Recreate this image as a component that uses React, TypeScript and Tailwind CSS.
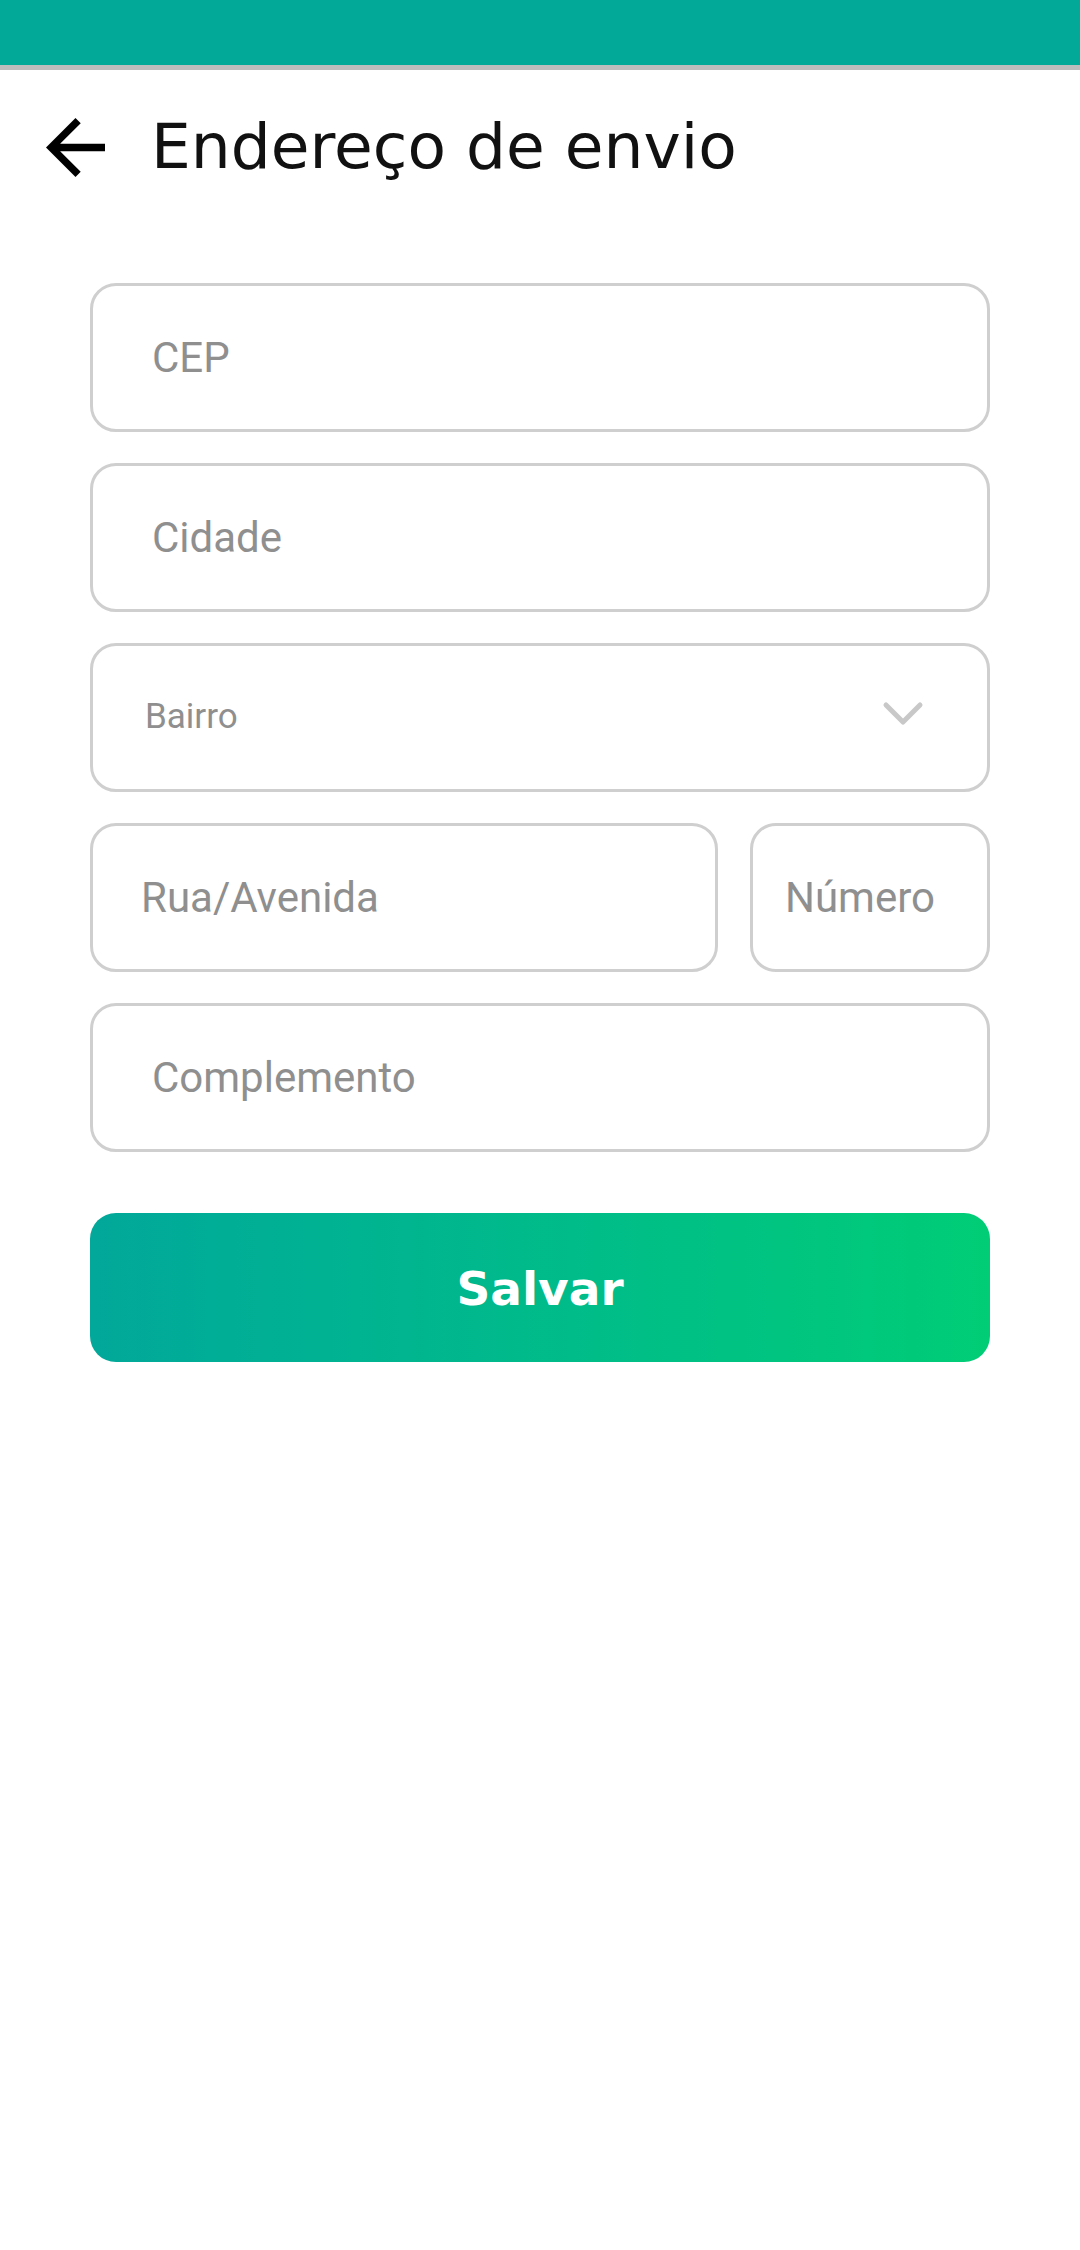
import React from 'react';

function Field({ label, className = '', textClass = '' }: { label: string; className?: string; textClass?: string }) {
  return (
    <div className={`h-[149px] rounded-[26px] border-[3px] border-[#cfcfcf] flex items-center ${className}`}>
      <span className={`font-['Roboto'] text-[42px] text-[#8f8f8f] leading-normal ${textClass}`}>{label}</span>
    </div>
  );
}

export default function App() {
  return (
    <div className="w-[1080px] min-h-[2250px] bg-white">
      {/* status bar */}
      <div className="h-[65px] bg-[#02a898]" />
      <div className="h-[5px] bg-[#bdbdbd]" />

      {/* header */}
      <div className="h-[154px] flex items-center pl-[46px]">
        <svg width="59" height="59" viewBox="4 4 16 16" fill="#000">
          <path d="M20 11H7.83l5.59-5.59L12 4l-8 8 8 8 1.41-1.41L7.83 13H20v-2z" />
        </svg>
        <h1 className="ml-[46px] font-['DejaVu_Sans'] font-normal text-[63px] leading-normal text-[#111]">
          Endereço de envio
        </h1>
      </div>

      {/* form */}
      <div className="mt-[59px] mx-[90px] flex flex-col gap-[31px]">
        <Field label="CEP" className="pl-[59px]" />
        <Field label="Cidade" className="pl-[59px]" />
        <div className="h-[149px] rounded-[26px] border-[3px] border-[#cfcfcf] flex items-center justify-between pl-[52px] pr-[62px]">
          <span className="font-['Roboto'] text-[35px] text-[#8f8f8f] leading-normal">Bairro</span>
          <svg width="44" height="26" viewBox="0 0 44 26" className="-mt-[7px]" fill="none" stroke="#c8c8c8" strokeWidth="5" strokeLinecap="round" strokeLinejoin="round">
            <polyline points="5 4 22 21 39 4" />
          </svg>
        </div>
        <div className="flex gap-[32px]">
          <Field label="Rua/Avenida" className="flex-1 pl-[48px]" />
          <Field label="Número" className="w-[240px] pl-[32px]" />
        </div>
        <Field label="Complemento" className="pl-[59px]" />

        <button className="mt-[30px] h-[149px] rounded-[26px] bg-gradient-to-r from-[#02a89a] to-[#01cd76] flex items-center justify-center">
          <span className="font-['DejaVu_Sans'] font-bold text-[47px] text-white leading-normal mt-[3px]">Salvar</span>
        </button>
      </div>
    </div>
  );
}
